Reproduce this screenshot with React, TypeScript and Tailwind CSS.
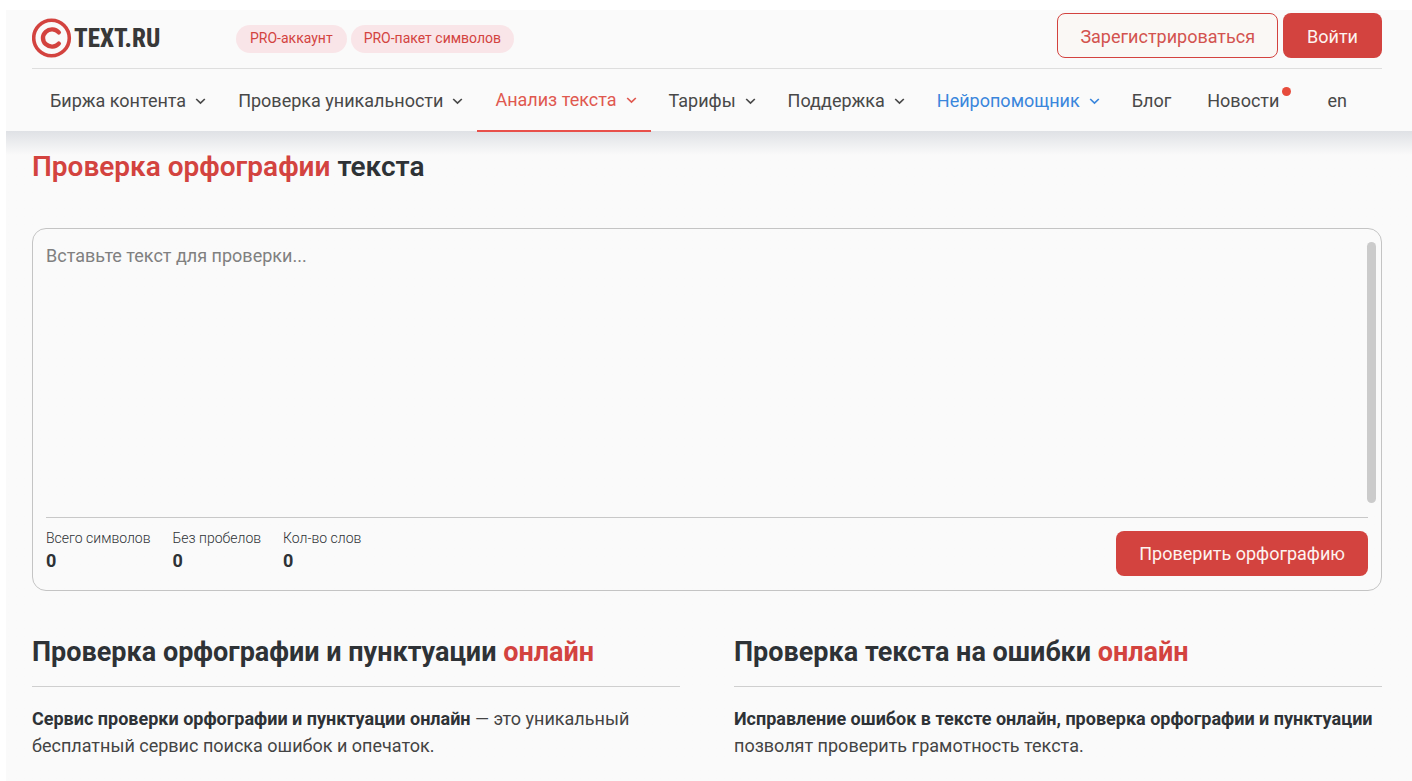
type NavItem = {
  label: string;
  menu?: boolean;
  tone?: "active" | "blue";
  dot?: boolean;
};

const NAV: NavItem[] = [
  { label: "Биржа контента", menu: true },
  { label: "Проверка уникальности", menu: true },
  { label: "Анализ текста", menu: true, tone: "active" },
  { label: "Тарифы", menu: true },
  { label: "Поддержка", menu: true },
  { label: "Нейропомощник", menu: true, tone: "blue" },
  { label: "Блог" },
  { label: "Новости", dot: true },
  { label: "en" },
];

const COUNTERS = [
  { id: "total", label: "Всего символов" },
  { id: "no-spaces", label: "Без пробелов" },
  { id: "words", label: "Кол-во слов" },
];

const TONES = {
  default: "pt-[3px] border-transparent text-[#484848]",
  active: "pt-px border-[#e8504a] text-[#e0584f]",
  blue: "pt-[3px] border-transparent text-[#3a86dc]",
};

function Chevron() {
  return (
    <svg
      aria-hidden
      viewBox="0 0 11 8"
      className="ml-[9px] mr-[14px] h-2 w-[11px] shrink-0"
      fill="none"
      stroke="currentColor"
      strokeWidth="1.7"
    >
      <path d="M1.2 2 5.5 6 9.8 2" />
    </svg>
  );
}

function Logo() {
  return (
    <a href="#" aria-label="TEXT.RU" className="flex w-[204px] shrink-0 items-center gap-0.5">
      <svg aria-hidden viewBox="0 0 40 40" className="size-10" fill="none" stroke="#d3433f">
        <circle cx="19.5" cy="20" r="17.8" strokeWidth="3.6" />
        <path
          d="M26.8 14.4A9 8.6 0 1 0 26.8 25.6"
          strokeWidth="4.4"
          strokeLinecap="round"
        />
      </svg>
      <span className="pt-0.5 font-['Roboto_Condensed','Liberation_Sans_Narrow',Roboto,sans-serif] text-[25px] leading-10 font-extrabold text-[#383838]">
        TEXT.RU
      </span>
    </a>
  );
}

function Header() {
  return (
    <header className="bg-[#fafafa] pr-[30px] pl-[26px]">
      <div className="flex h-[59px] items-start border-b border-[#dedede] pt-[3px]">
        <div className="flex h-[50px] items-center">
          <Logo />
          <div className="flex gap-1 pt-0.5">
            <a
              href="#"
              className="rounded-full bg-[#f9e5e8] px-3.5 pb-0.5 text-sm leading-[26px] text-[#d3433f]"
            >
              PRO-аккаунт
            </a>
            <a
              href="#"
              className="rounded-full bg-[#f9e5e8] px-[13px] pb-0.5 text-sm leading-[26px] text-[#d3433f]"
            >
              PRO-пакет символов
            </a>
          </div>
        </div>
        <div className="ml-auto flex gap-[5px] text-lg">
          <button
            type="button"
            className="h-[45px] rounded-lg border border-[#d3433f] bg-[#faf8f5] px-[22px] pt-0.5 text-[#d3534f]"
          >
            Зарегистрироваться
          </button>
          <button
            type="button"
            className="h-[45px] rounded-lg bg-[#d3433f] px-6 pt-0.5 text-[#fdf3f0]"
          >
            Войти
          </button>
        </div>
      </div>

      <nav aria-label="Основное меню" className="flex h-[62px] items-start">
        {NAV.map(({ label, menu, tone, dot }) => (
          <a
            key={label}
            href="#"
            className={`flex h-[63px] items-center border-b-2 pl-[18px] text-lg whitespace-nowrap ${
              menu ? "" : "pr-[18px]"
            } ${TONES[tone ?? "default"]}`}
          >
            {label}
            {menu && <Chevron />}
            {dot && <span className="mb-5 ml-[3px] size-[9px] rounded-full bg-[#e74c3c]" />}
          </a>
        ))}
      </nav>
    </header>
  );
}

function Checker() {
  return (
    <form
      className="relative mt-[43px] rounded-[14px] border border-[#c4c4c4] p-[13px] pb-3.5"
      onSubmit={(e) => e.preventDefault()}
    >
      <textarea
        aria-label="Текст для проверки"
        placeholder="Вставьте текст для проверки..."
        className="block h-[275px] w-full resize-none bg-transparent text-lg leading-7 outline-none placeholder:text-[#808080]"
      />
      {/* Scroll thumb */}
      <div
        aria-hidden
        className="absolute top-[13px] right-[5px] h-[261px] w-[9px] rounded-full bg-[#cbcbcb]"
      />

      <div className="flex items-start justify-between border-t border-[#c8c8c8] pt-[13px]">
        <div className="flex gap-[22px]">
          {COUNTERS.map(({ id, label }) => (
            <div key={id}>
              <label htmlFor={id} className="block text-sm leading-3.5 font-light">
                {label}
              </label>
              <output id={id} className="mt-1 block text-lg leading-6 font-bold">
                0
              </output>
            </div>
          ))}
        </div>
        <button
          type="submit"
          className="h-[45px] rounded-lg bg-[#d3433f] px-[23px] text-lg text-[#fdf3f0]"
        >
          Проверить орфографию
        </button>
      </div>
    </form>
  );
}

export default function App() {
  return (
    <div className="min-h-screen bg-white pt-2.5 pl-1.5 font-[Roboto,sans-serif] text-[#2e3236]">
      <div className="bg-[#fafafa]">
        <Header />

        <main className="bg-linear-to-b from-[#dfe1e5] to-[#fafafa] to-[24px] pr-[30px] pb-[22px] pl-[26px]">
          <h1 className="pt-[18px] text-[28px] leading-9 font-semibold">
            <span className="text-[#d3433f]">Проверка орфографии</span> текста
          </h1>

          <Checker />

          <div className="mt-[43px] grid grid-cols-2 gap-[54px]">
            <section>
              <h2 className="border-b border-[#cfcfcf] pb-4 text-[27px] leading-9 font-bold">
                Проверка орфографии и пунктуации <span className="text-[#d3433f]">онлайн</span>
              </h2>
              <p className="mt-[18px] text-lg leading-[27px] text-[#444]">
                <b className="font-bold text-[#2e3236]">
                  Сервис проверки орфографии и пунктуации онлайн
                </b>{" "}
                — это уникальный бесплатный сервис поиска ошибок и опечаток.
              </p>
            </section>
            <section>
              <h2 className="border-b border-[#cfcfcf] pb-4 text-[27px] leading-9 font-bold">
                Проверка текста на ошибки <span className="text-[#d3433f]">онлайн</span>
              </h2>
              <p className="mt-[18px] text-lg leading-[27px] text-[#444]">
                <b className="font-bold text-[#2e3236]">
                  Исправление ошибок в тексте онлайн, проверка орфографии и пунктуации
                </b>{" "}
                позволят проверить грамотность текста.
              </p>
            </section>
          </div>
        </main>
      </div>
    </div>
  );
}
